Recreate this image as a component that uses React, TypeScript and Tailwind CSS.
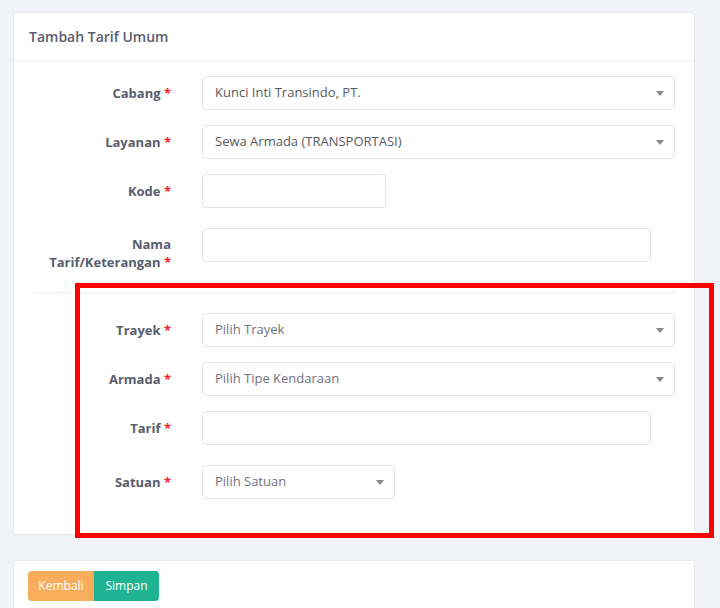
import React from "react";

const font = { fontFamily: '"Open Sans", "Noto Sans", Arial, sans-serif' };

function Label({ children, twoLine }: { children: React.ReactNode; twoLine?: boolean }) {
  return (
    <div
      className={`w-[138px] shrink-0 text-right text-[13px] font-bold text-[#595d6e] ${
        twoLine ? "pt-[7px] leading-[18px]" : "h-[34px] leading-[34px]"
      }`}
    >
      {children}
      <span className="text-[#f5222d]"> *</span>
    </div>
  );
}

function Select({ value, placeholder, w }: { value: string; placeholder?: boolean; w: string }) {
  return (
    <div
      className={`${w} ml-[31px] h-[34px] rounded-[4px] border border-[#e2e5ec] bg-white flex items-center pl-[12px] pr-[10px] text-[13px] ${
        placeholder ? "text-[#6f727d]" : "text-[#575962]"
      }`}
    >
      <span className="flex-1 truncate">{value}</span>
      <span className="w-0 h-0 border-l-[4px] border-r-[4px] border-t-[5px] border-l-transparent border-r-transparent border-t-[#888888]" />
    </div>
  );
}

function Input({ w }: { w: string }) {
  return <div className={`${w} ml-[31px] h-[34px] rounded-[4px] border border-[#e2e5ec] bg-white`} />;
}

export default function App() {
  return (
    <div className="relative w-[720px] h-[608px] overflow-hidden bg-[#f2f3f8]" style={font}>
      <div className="pt-[12px] pl-[13px] w-[695px]">
        <div className="bg-white border border-[#e8e9ee] rounded-[2px]">
          <div className="h-[48px] border-b border-[#ebedf2] flex items-center pl-[15px]">
            <h3 className="text-[14px] font-semibold text-[#595d6e]">Tambah Tarif Umum</h3>
          </div>
          <div className="px-[19px] pt-[15px] pb-[35px]">
            <div className="flex">
              <Label>Cabang</Label>
              <Select w="w-[473px]" value="Kunci Inti Transindo, PT." />
            </div>
            <div className="flex mt-[15px]">
              <Label>Layanan</Label>
              <Select w="w-[473px]" value="Sewa Armada (TRANSPORTASI)" />
            </div>
            <div className="flex mt-[15px]">
              <Label>Kode</Label>
              <Input w="w-[184px]" />
            </div>
            <div className="flex mt-[20px]">
              <Label twoLine>
                Nama
                <br />
                Tarif/Keterangan
              </Label>
              <Input w="w-[449px]" />
            </div>
            <div className="mt-[21px] h-px bg-[#ebedf2] w-[642px]" />
            <div className="flex mt-[20px]">
              <Label>Trayek</Label>
              <Select w="w-[473px]" value="Pilih Trayek" placeholder />
            </div>
            <div className="flex mt-[15px]">
              <Label>Armada</Label>
              <Select w="w-[473px]" value="Pilih Tipe Kendaraan" placeholder />
            </div>
            <div className="flex mt-[15px]">
              <Label>Tarif</Label>
              <Input w="w-[449px]" />
            </div>
            <div className="flex mt-[20px]">
              <Label>Satuan</Label>
              <Select w="w-[193px]" value="Pilih Satuan" placeholder />
            </div>
          </div>
        </div>
        <div className="mt-[25px] bg-white border border-[#e8e9ee] rounded-[2px] h-[60px] pt-[10px] pl-[14px]">
          <div className="flex">
            <button className="h-[30px] w-[66px] rounded-l-[4px] bg-[#f7ad5c] text-white text-[12px]">Kembali</button>
            <button className="h-[30px] w-[65px] rounded-r-[4px] bg-[#1fb393] text-white text-[12px]">Simpan</button>
          </div>
        </div>
      </div>
      <div className="absolute left-[75px] top-[283px] w-[639px] h-[255px] border-[5px] border-[#ff0000]" />
    </div>
  );
}
